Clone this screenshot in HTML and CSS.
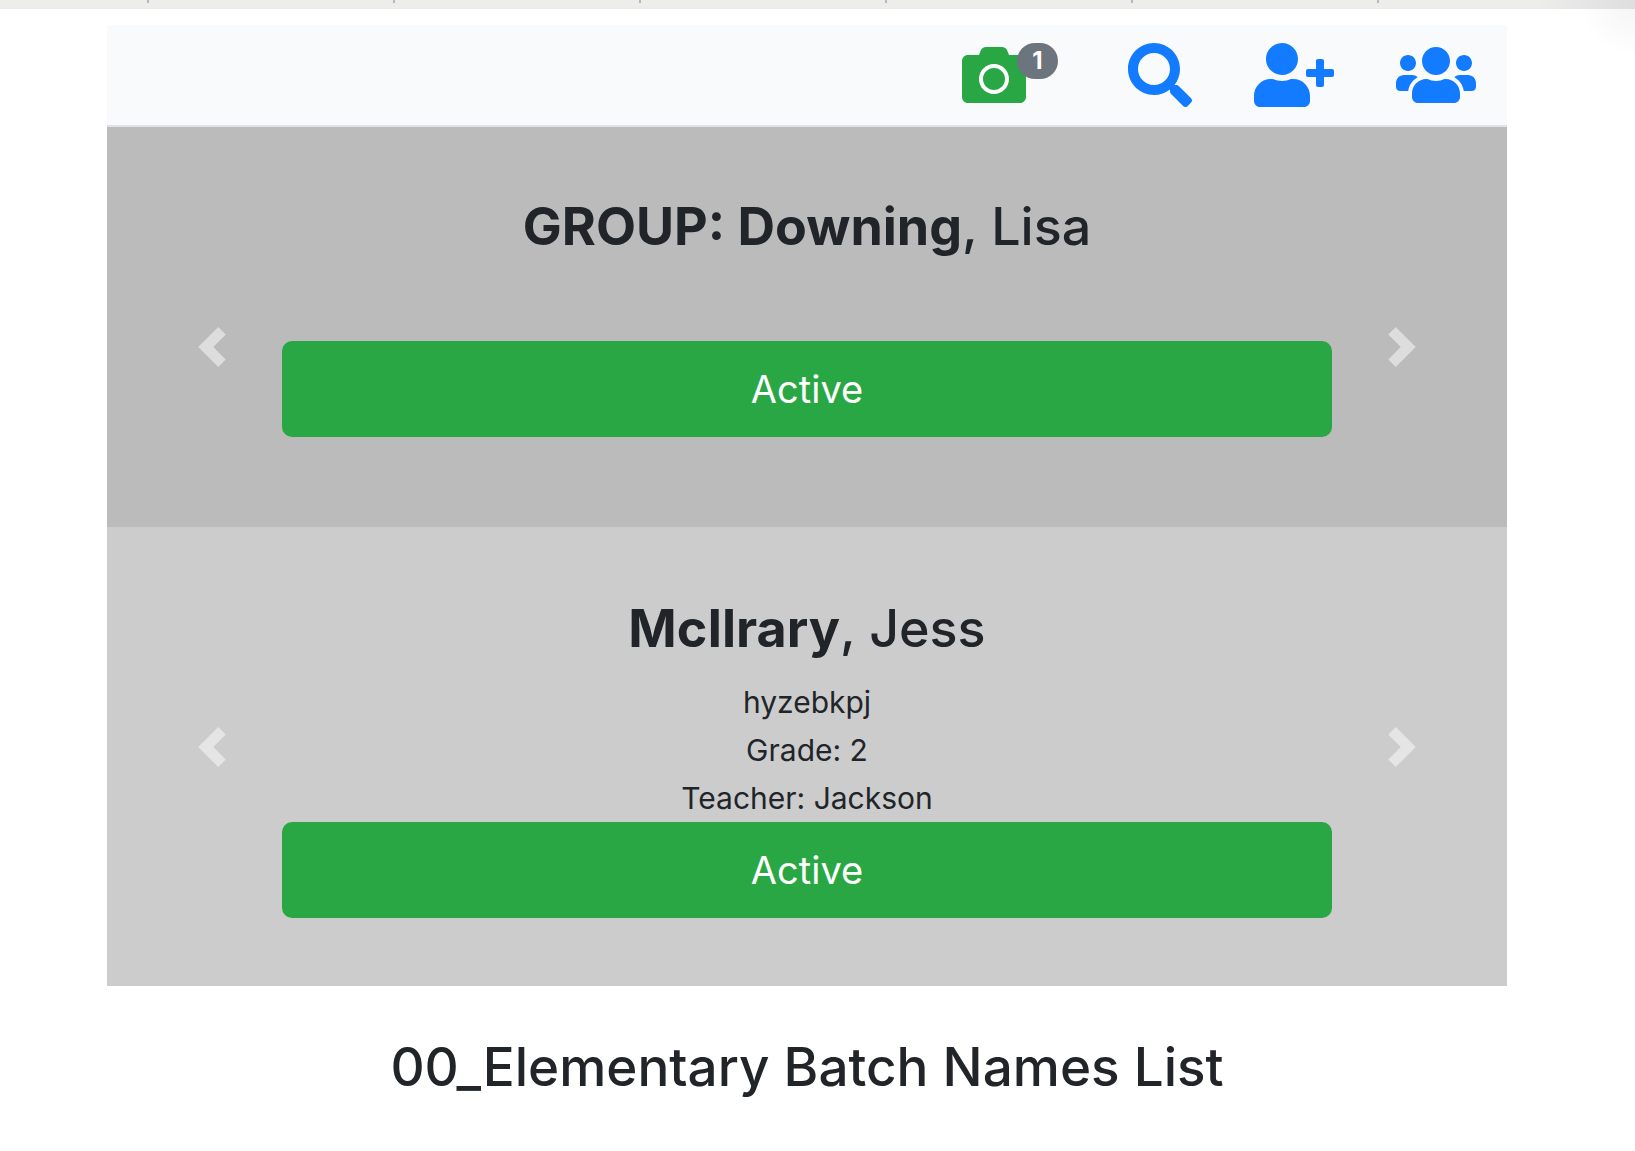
FILE: index.html
```
<!DOCTYPE html>
<html lang="en">
<head>
  <meta charset="UTF-8">
  <meta name="viewport" content="width=device-width, initial-scale=1.0">
  <title>00_Elementary Batch Names List</title>
  <link rel="stylesheet" href="styles.css">
</head>
<body>
  <div class="tab-strip">
    <span class="tab tab-first"></span>
    <span class="tab"></span>
    <span class="tab"></span>
    <span class="tab"></span>
    <span class="tab"></span>
    <span class="tab"></span>
  </div>

  <div class="page">
    <!-- Toolbar -->
    <nav class="navbar">
      <a href="#camera" class="nav-icon camera" aria-label="Photos">
        <svg class="icon" viewBox="0 0 512 512"><circle cx="256" cy="288" r="110" fill="none" stroke="#fff" stroke-width="30"/><path fill="currentColor" d="M512 144v288c0 26.500-21.500 48-48 48H48c-26.500 0-48-21.500-48-48V144c0-26.500 21.500-48 48-48h88l12.300-32.900c7-18.700 24.900-31.100 44.900-31.100h125.500c20 0 37.900 12.400 44.900 31.100L376 96h88c26.500 0 48 21.500 48 48zM376 288c0-66.200-53.800-120-120-120s-120 53.800-120 120 53.800 120 120 120 120-53.800 120-120zm-32 0c0 48.500-39.500 88-88 88s-88-39.500-88-88 39.500-88 88-88 88 39.500 88 88z"/></svg>
        <span class="badge">1</span>
      </a>
      <a href="#search" class="nav-icon" aria-label="Search">
        <svg class="icon" viewBox="0 0 512 512"><path fill="currentColor" d="M505 442.700L405.300 343c-4.500-4.500-10.600-7-17-7H372c27.600-35.300 44-79.700 44-128C416 93.100 322.900 0 208 0S0 93.100 0 208s93.100 208 208 208c48.300 0 92.700-16.400 128-44v16.300c0 6.400 2.500 12.500 7 17l99.700 99.700c9.400 9.400 24.600 9.400 33.900 0l28.300-28.300c9.400-9.400 9.400-24.600.1-34zM208 336c-70.700 0-128-57.200-128-128 0-70.700 57.200-128 128-128 70.700 0 128 57.200 128 128 0 70.700-57.200 128-128 128z"/></svg>
      </a>
      <a href="#add" class="nav-icon" aria-label="Add person">
        <svg class="icon icon-wide" viewBox="0 0 640 512"><path fill="currentColor" d="M624 208h-64v-64c0-8.800-7.200-16-16-16h-32c-8.800 0-16 7.200-16 16v64h-64c-8.800 0-16 7.200-16 16v32c0 8.800 7.200 16 16 16h64v64c0 8.800 7.200 16 16 16h32c8.800 0 16-7.200 16-16v-64h64c8.800 0 16-7.200 16-16v-32c0-8.800-7.200-16-16-16zm-400 48c70.700 0 128-57.300 128-128S294.700 0 224 0 96 57.300 96 128s57.300 128 128 128zm89.600 32h-16.700c-22.200 10.200-46.900 16-72.900 16s-50.600-5.800-72.900-16h-16.700C60.200 288 0 348.200 0 422.400V464c0 26.500 21.500 48 48 48h352c26.500 0 48-21.500 48-48v-41.600c0-74.200-60.200-134.400-134.400-134.400z"/></svg>
      </a>
      <a href="#groups" class="nav-icon" aria-label="Groups">
        <svg class="icon icon-wide" viewBox="0 0 640 512"><path fill="currentColor" d="M96 224c35.300 0 64-28.700 64-64s-28.700-64-64-64-64 28.700-64 64 28.700 64 64 64zm448 0c35.300 0 64-28.700 64-64s-28.700-64-64-64-64 28.700-64 64 28.700 64 64 64zm32 32h-64c-17.600 0-33.500 7.100-45.100 18.600 40.300 22.100 68.900 62 75.100 109.400h66c17.700 0 32-14.300 32-32v-32c0-35.300-28.700-64-64-64zm-256 0c61.900 0 112-50.100 112-112S381.900 32 320 32 208 82.100 208 144s50.100 112 112 112zm76.800 32h-8.300c-20.800 10-43.900 16-68.500 16s-47.600-6-68.500-16h-8.300C179.600 288 128 339.600 128 403.200V432c0 26.500 21.500 48 48 48h288c26.500 0 48-21.500 48-48v-28.800c0-63.600-51.600-115.200-115.200-115.200zm-223.700-13.400C161.500 263.100 145.600 256 128 256H64c-35.300 0-64 28.700-64 64v32c0 17.700 14.300 32 32 32h65.900c6.300-47.400 34.900-87.300 75.200-109.400z"/></svg>
      </a>
    </nav>

    <!-- Group -->
    <section class="slide slide-group">
      <button type="button" class="control prev" aria-label="Previous group">
        <svg class="arrow" viewBox="0 0 8 8"><path fill="#fff" d="M5.250 0l-4 4 4 4 1.500-1.500L4.250 4l2.500-2.500L5.250 0z"/></svg>
      </button>
      <div class="caption">
        <h2 class="name"><strong>GROUP: Downing</strong>, Lisa</h2>
        <button type="button" class="btn">Active</button>
      </div>
      <button type="button" class="control next" aria-label="Next group">
        <svg class="arrow" viewBox="0 0 8 8"><path fill="#fff" d="M2.750 0l-1.500 1.500L3.750 4l-2.500 2.500L2.750 8l4-4-4-4z"/></svg>
      </button>
    </section>

    <!-- Student -->
    <section class="slide slide-student">
      <button type="button" class="control prev" aria-label="Previous student">
        <svg class="arrow" viewBox="0 0 8 8"><path fill="#fff" d="M5.250 0l-4 4 4 4 1.500-1.500L4.250 4l2.500-2.500L5.250 0z"/></svg>
      </button>
      <div class="caption">
        <h2 class="name"><strong>McIlrary</strong>, Jess</h2>
        <div class="details">
          <div>hyzebkpj</div>
          <div>Grade: 2</div>
          <div>Teacher: Jackson</div>
        </div>
        <button type="button" class="btn">Active</button>
      </div>
      <button type="button" class="control next" aria-label="Next student">
        <svg class="arrow" viewBox="0 0 8 8"><path fill="#fff" d="M2.750 0l-1.500 1.500L3.750 4l-2.500 2.500L2.750 8l4-4-4-4z"/></svg>
      </button>
    </section>

    <h2 class="list-title">00_Elementary Batch Names List</h2>
  </div>
</body>
</html>
```
FILE: styles.css
```
*{
  box-sizing: border-box;
}
body{
  margin: 0;
  font-family: Inter, "Liberation Sans", sans-serif;
  font-size: 30px;
  line-height: 48px;
  color: #212529;
  background: radial-gradient(circle at top right, #f4f4f4, #fff 56px) no-repeat #fff;
}
.tab-strip{
  display: flex;
  height: 9px;
  overflow: hidden;
  background: linear-gradient(to right, #ededec 94%, #dedede);
}
.tab{
  flex: 0 0 246px;
  height: 3px;
  border-right: 2px solid #b8b8b8;
}
.tab-first{
  flex-basis: 149px;
}
.page{
  padding: 16px 128px 32px 107px;
}
.navbar{
  display: flex;
  justify-content: flex-end;
  gap: 62px;
  padding: 18px 31px;
  background: #f8fafc;
  border-bottom: 2px solid #dee2e6;
}
.nav-icon{
  display: flex;
  color: #127bff;
  text-decoration: none;
}
.camera{
  color: #2aa745;
  padding-right: 8px;
}
.icon{
  display: block;
  width: 64px;
  height: 64px;
}
.icon-wide{
  width: 80px;
}
.badge{
  width: 41px;
  height: 36px;
  margin-left: -9px;
  border-radius: 18px;
  background: #6c757d;
  color: #fff;
  font-size: 24px;
  font-weight: 700;
  line-height: 36px;
  text-align: center;
}
.slide{
  display: grid;
  grid-template-columns: 1fr 6fr 1fr;
  align-items: start;
  text-align: center;
}
.slide-group{
  background: #bbb;
}
.slide-student{
  background: #ccc;
}
.slide-group .caption{
  padding: 66px 0 90px;
}
.slide-student .caption{
  padding: 68px 0;
}
.control{
  display: flex;
  justify-content: center;
  margin-top: 200px;
  padding: 0;
  border: 0;
  background: none;
  opacity: 0.5;
  cursor: pointer;
}
.control:hover{
  opacity: 0.9;
}
.prev{
  padding-left: 35px;
}
.next{
  padding-right: 35px;
}
.arrow{
  width: 40px;
  height: 40px;
}
.name, .list-title{
  margin: 0 0 16px;
  font-size: 53px;
  font-weight: 500;
  line-height: 67px;
}
.name{
  font-size: 52px;
}
.name strong{
  font-weight: 700;
}
.slide-group .name{
  margin-bottom: 81px;
}
.btn{
  display: block;
  width: 100%;
  height: 96px;
  padding: 0;
  border: 0;
  border-radius: 10px;
  background: #2aa745;
  color: #fff;
  font-family: inherit;
  font-size: 38px;
  line-height: 60px;
  cursor: pointer;
}
.list-title{
  margin-top: 48px;
  text-align: center;
}
```
